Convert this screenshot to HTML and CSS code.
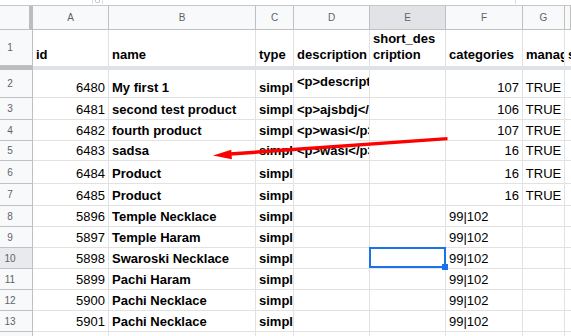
FILE: index.html
```html
<!DOCTYPE html>
<html lang="en">
<head>
    <meta charset="UTF-8">
    <meta name="viewport" content="width=device-width, initial-scale=1.0">
    <title>products sheet</title>
    <link rel="stylesheet" href="styles.css">
</head>
<body>
    <div class="sheet">
        <div class="topbar">
            <span class="knob"><i></i></span>
            <span class="tick"></span>
        </div>

        <div class="row head">
            <div class="corner"></div>
            <div class="col">A</div>
            <div class="col">B</div>
            <div class="col">C</div>
            <div class="col">D</div>
            <div class="col active">E</div>
            <div class="col">F</div>
            <div class="col">G</div>
            <div class="col"></div>
        </div>

        <div class="row r1">
            <div class="rh">1</div>
            <div class="c b">id</div>
            <div class="c b">name</div>
            <div class="c b">type</div>
            <div class="c b">description</div>
            <div class="c b wrap">short_description</div>
            <div class="c b">categories</div>
            <div class="c b">manage</div>
            <div class="c b">stock</div>
        </div>

        <div class="freeze"><span></span></div>

        <div class="row h28">
            <div class="rh">2</div>
            <div class="c num">6480</div>
            <div class="c b">My first 1</div>
            <div class="c b">simple</div>
            <div class="c b top">&lt;p&gt;description</div>
            <div class="c"></div>
            <div class="c num">107</div>
            <div class="c ctr">TRUE</div>
            <div class="c"></div>
        </div>
        <div class="row h22">
            <div class="rh">3</div>
            <div class="c num">6481</div>
            <div class="c b">second test product</div>
            <div class="c b">simple</div>
            <div class="c b">&lt;p&gt;ajsbdj&lt;/p&gt;</div>
            <div class="c"></div>
            <div class="c num">106</div>
            <div class="c ctr">TRUE</div>
            <div class="c"></div>
        </div>
        <div class="row h21">
            <div class="rh">4</div>
            <div class="c num">6482</div>
            <div class="c b">fourth product</div>
            <div class="c b">simple</div>
            <div class="c b">&lt;p&gt;wasi&lt;/p&gt;</div>
            <div class="c"></div>
            <div class="c num">107</div>
            <div class="c ctr">TRUE</div>
            <div class="c"></div>
        </div>
        <div class="row h20">
            <div class="rh">5</div>
            <div class="c num">6483</div>
            <div class="c b">sadsa</div>
            <div class="c b">simple</div>
            <div class="c b">&lt;p&gt;wasi&lt;/p&gt;</div>
            <div class="c"></div>
            <div class="c num">16</div>
            <div class="c ctr">TRUE</div>
            <div class="c"></div>
        </div>
        <div class="row h23">
            <div class="rh">6</div>
            <div class="c num">6484</div>
            <div class="c b">Product</div>
            <div class="c b">simple</div>
            <div class="c"></div>
            <div class="c"></div>
            <div class="c num">16</div>
            <div class="c ctr">TRUE</div>
            <div class="c"></div>
        </div>
        <div class="row h22">
            <div class="rh">7</div>
            <div class="c num">6485</div>
            <div class="c b">Product</div>
            <div class="c b">simple</div>
            <div class="c"></div>
            <div class="c"></div>
            <div class="c num">16</div>
            <div class="c ctr">TRUE</div>
            <div class="c"></div>
        </div>
        <div class="row">
            <div class="rh">8</div>
            <div class="c num">5896</div>
            <div class="c b">Temple Necklace</div>
            <div class="c b">simple</div>
            <div class="c"></div>
            <div class="c"></div>
            <div class="c">99|102</div>
            <div class="c"></div>
            <div class="c"></div>
        </div>
        <div class="row">
            <div class="rh">9</div>
            <div class="c num">5897</div>
            <div class="c b">Temple Haram</div>
            <div class="c b">simple</div>
            <div class="c"></div>
            <div class="c"></div>
            <div class="c">99|102</div>
            <div class="c"></div>
            <div class="c"></div>
        </div>
        <div class="row">
            <div class="rh active">10</div>
            <div class="c num">5898</div>
            <div class="c b">Swaroski Necklace</div>
            <div class="c b">simple</div>
            <div class="c"></div>
            <div class="c selected"></div>
            <div class="c">99|102</div>
            <div class="c"></div>
            <div class="c"></div>
        </div>
        <div class="row">
            <div class="rh">11</div>
            <div class="c num">5899</div>
            <div class="c b">Pachi Haram</div>
            <div class="c b">simple</div>
            <div class="c"></div>
            <div class="c"></div>
            <div class="c">99|102</div>
            <div class="c"></div>
            <div class="c"></div>
        </div>
        <div class="row">
            <div class="rh">12</div>
            <div class="c num">5900</div>
            <div class="c b">Pachi Necklace</div>
            <div class="c b">simple</div>
            <div class="c"></div>
            <div class="c"></div>
            <div class="c">99|102</div>
            <div class="c"></div>
            <div class="c"></div>
        </div>
        <div class="row">
            <div class="rh">13</div>
            <div class="c num">5901</div>
            <div class="c b">Pachi Necklace</div>
            <div class="c b">simple</div>
            <div class="c"></div>
            <div class="c"></div>
            <div class="c">99|102</div>
            <div class="c"></div>
            <div class="c"></div>
        </div>
        <div class="row">
            <div class="rh">14</div>
            <div class="c"></div>
            <div class="c"></div>
            <div class="c"></div>
            <div class="c"></div>
            <div class="c"></div>
            <div class="c"></div>
            <div class="c"></div>
            <div class="c"></div>
        </div>

        <!-- red annotation arrow drawn over the sheet -->
        <svg class="arrow" width="571" height="336" viewBox="0 0 571 336">
            <line x1="447.5" y1="138.6" x2="226" y2="154.3" stroke="#f00" stroke-width="3.4"/>
            <polygon points="213,155.4 231.2,149.8 231.9,159.2" fill="#f00"/>
        </svg>
    </div>
</body>
</html>
```

FILE: styles.css
```css
body {
    margin: 0;
    background: #fff;
    font-family: "Liberation Sans", Arial, sans-serif;
    overflow: hidden;
}
.sheet {
    position: relative;
    width: 571px;
    height: 336px;
    overflow: hidden;
}
.topbar {
    height: 6px;
    box-sizing: border-box;
    border-bottom: 1px solid #c7c7c7;
    display: flex;
}
.knob {
    margin-left: 92px;
    width: 11px;
    height: 4px;
    box-sizing: border-box;
    border-left: 1px solid #dadce0;
    border-right: 1px solid #dadce0;
    display: flex;
    justify-content: center;
}
.knob i {
    width: 3px;
    height: 2px;
    border-radius: 0 0 2px 2px;
    border: 1px solid #c4c7c5;
    border-top: none;
}
.tick {
    margin-left: 412px;
    width: 1px;
    height: 4px;
    background: #dadce0;
}

.row {
    display: grid;
    grid-template-columns: 33px 76px 147px 38px 76px 76px 77px 42px 1fr;
    height: 21px;
}
.row > div {
    box-sizing: border-box;
    overflow: hidden;
    white-space: nowrap;
}
.h28 { height: 28px; }
.h23 { height: 23px; }
.h22 { height: 22px; }
.h21 { height: 21px; }
.h20 { height: 20px; }

/* column letters */
.head {
    height: 24px;
}
.corner {
    background: #f8f9fa;
    border-right: 4px solid #bdbdbd;
    border-bottom: 1px solid #c0c0c0;
}
.col {
    background: #f8f9fa;
    border-right: 1px solid #c0c0c0;
    border-bottom: 1px solid #c0c0c0;
    color: #5f6368;
    font-size: 10px;
    display: flex;
    align-items: center;
    justify-content: center;
}
.col.active {
    background: #e1e3e6;
}

/* row numbers */
.rh {
    background: #f8f9fa;
    border-right: 1px solid #c0c0c0;
    border-bottom: 1px solid #c0c0c0;
    color: #5f6368;
    font-size: 10px;
    display: flex;
    align-items: center;
    justify-content: center;
    padding-right: 12px;
}
.rh.active {
    background: #e8eaed;
}

/* cells */
.c {
    border-right: 1px solid #e2e2e2;
    border-bottom: 1px solid #e2e2e2;
    font-size: 13px;
    line-height: 16px;
    color: #000;
    display: flex;
    align-items: flex-end;
    padding: 0 3px 1px;
}
.b {
    font-weight: bold;
}
.num {
    justify-content: flex-end;
}
.ctr {
    justify-content: center;
}
.top {
    align-items: flex-start;
    padding-top: 4px;
}

.r1 {
    height: 36px;
}
.r1 .c {
    border-bottom: none;
    padding-bottom: 3px;
}
.r1 .wrap {
    white-space: normal;
    word-break: break-all;
    line-height: 16px;
}

.freeze {
    height: 4px;
    background: #dfe2e8;
}
.freeze span {
    display: block;
    width: 33px;
    height: 4px;
    background: #bdbdbd;
}

.selected {
    position: relative;
    overflow: visible !important;
}
.selected::after {
    content: "";
    position: absolute;
    top: -1px;
    left: -1px;
    right: -1px;
    bottom: 0;
    border: 2px solid #1a73e8;
}
.selected::before {
    content: "";
    position: absolute;
    right: -3px;
    bottom: -2px;
    width: 6px;
    height: 6px;
    background: #1a73e8;
    z-index: 1;
}

.arrow {
    position: absolute;
    left: 0;
    top: 0;
    pointer-events: none;
}
```
